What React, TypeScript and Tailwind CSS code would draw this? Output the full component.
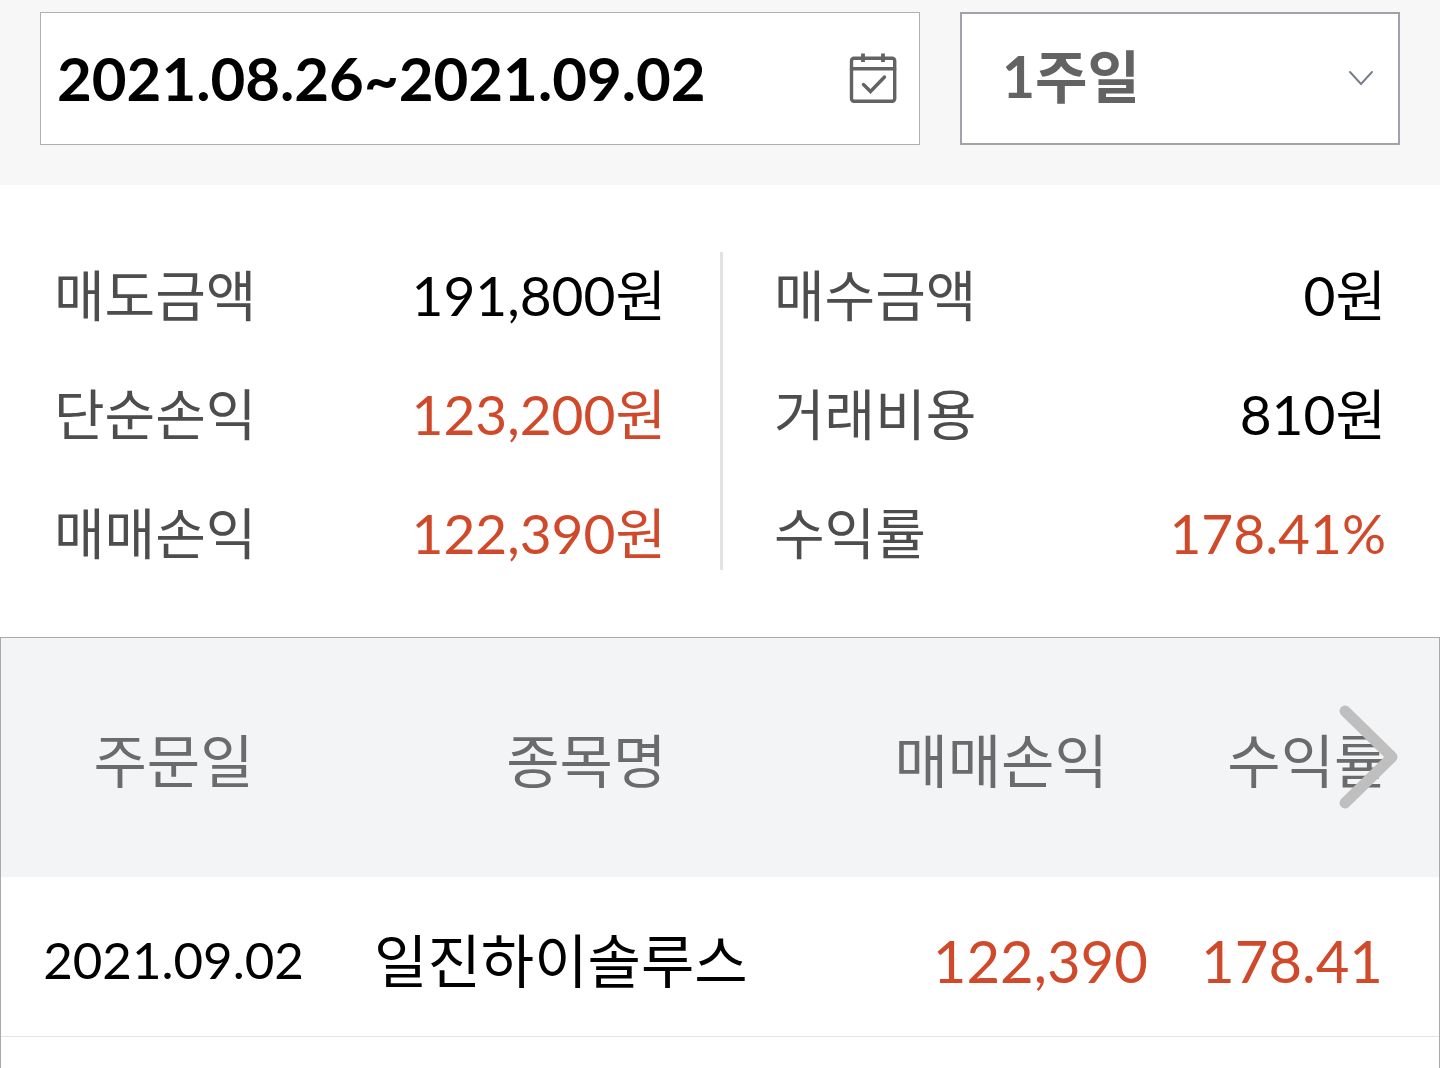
import React from 'react';
import clsx from 'clsx';

interface SummaryItem {
    label: string;
    value: string;
    highlight?: boolean;
}

interface TradeRow {
    date: string;
    name: string;
    profit: string;
    rate: string;
}

const LEFT_ITEMS: SummaryItem[] = [
    { label: '매도금액', value: '191,800원' },
    { label: '단순손익', value: '123,200원', highlight: true },
    { label: '매매손익', value: '122,390원', highlight: true },
];

const RIGHT_ITEMS: SummaryItem[] = [
    { label: '매수금액', value: '0원' },
    { label: '거래비용', value: '810원' },
    { label: '수익률', value: '178.41%', highlight: true },
];

const TRADES: TradeRow[] = [
    { date: '2021.09.02', name: '일진하이솔루스', profit: '122,390', rate: '178.41' },
];

const PERIODS = ['1주일', '1개월', '3개월'];

const CalendarIcon = () => (
    <svg viewBox="0 0 48 54" className="w-12 h-[54px]" fill="none" stroke="#636363" strokeWidth="3.4" strokeLinecap="round">
        <rect x="2.5" y="7.2" width="43.2" height="43" rx="2.5" />
        <path d="M2.5 17.8H45.7" />
        <path d="M14 2.5V11M34 2.5V11" strokeWidth="3.8" strokeLinecap="butt" />
        <path d="M14.5 33.5L21.5 40.5L35.5 26" strokeLinejoin="miter" />
    </svg>
);

const SearchBar = () => (
    <div className="grid grid-cols-[2fr_1fr] gap-10 px-10 pt-3 pb-10 bg-[#f7f7f7]">
        <div className="flex items-center h-[133px] pl-4 pr-[22px] pb-0.5 bg-white border border-[#b0b0b0]">
            <input
                type="text"
                aria-label="조회기간"
                defaultValue="2021.08.26~2021.09.02"
                className="flex-1 min-w-0 h-full text-[60px] font-bold text-black outline-none"
            />
            <button type="button" aria-label="달력">
                <CalendarIcon />
            </button>
        </div>
        <div className="relative">
            <select
                aria-label="기간 선택"
                className="w-full h-[133px] pl-10 pr-20 pb-1 appearance-none bg-white border-2 border-[#a0a4aa] text-[57px] font-bold text-[#636363] outline-none"
            >
                {PERIODS.map((period) => (
                    <option key={period}>{period}</option>
                ))}
            </select>
            <svg
                viewBox="0 0 26 18"
                className="absolute right-[26px] top-1/2 -translate-y-1/2 w-[26px] h-[18px] pointer-events-none"
                fill="none"
                stroke="#76808b"
                strokeWidth="2"
                strokeLinecap="round"
            >
                <path d="M2 2L13 14L24 2" />
            </svg>
        </div>
    </div>
);

const SummaryColumn: React.FC<{ items: SummaryItem[]; className?: string }> = ({ items, className }) => (
    <dl className={clsx('flex flex-col gap-[39px]', className)}>
        {items.map((item) => (
            <div key={item.label} className="flex items-center justify-between h-20 pt-1.5 text-[55px] leading-none">
                <dt className="text-[#4d4d4d]">{item.label}</dt>
                <dd className={item.highlight ? 'text-[#d0492a]' : 'text-black'}>{item.value}</dd>
            </div>
        ))}
    </dl>
);

const TradeTable = () => (
    <div className="relative flex-1 border border-b-0 border-[#aaaaaa]">
        <table className="w-full table-fixed border-separate border-spacing-0">
            <colgroup>
                <col className="w-[24%]" />
                <col className="w-[33.4%]" />
                <col className="w-[24.3%]" />
                <col />
            </colgroup>
            <thead>
                <tr className="h-[239px] bg-[#f3f4f6] text-[58px] text-[#6b6b6b]">
                    {['주문일', '종목명', '매매손익', '수익률'].map((title) => (
                        <th key={title} scope="col" className="pt-1.5 font-normal whitespace-nowrap">{title}</th>
                    ))}
                </tr>
            </thead>
            <tbody>
                {TRADES.map((trade) => (
                    <tr key={trade.name} className="h-40 text-[58px] whitespace-nowrap *:border-b *:border-[#e3e3e3] *:pt-2">
                        <td className="text-center text-[51px] text-black">{trade.date}</td>
                        <td className="pl-7 text-black">{trade.name}</td>
                        <td className="pr-7 text-right text-[#d0492a]">{trade.profit}</td>
                        <td className="pr-14 text-right text-[#d0492a]">{trade.rate}</td>
                    </tr>
                ))}
            </tbody>
        </table>
        <button type="button" aria-label="다음 항목" className="absolute right-10 top-[66px]">
            <svg
                viewBox="0 0 60 106"
                className="w-[60px] h-[106px]"
                fill="none"
                stroke="#bfbfbf"
                strokeWidth="11"
                strokeLinecap="round"
                strokeLinejoin="round"
            >
                <path d="M6 7L53 53L6 99" />
            </svg>
        </button>
    </div>
);

export default function App() {
    return (
        <main className="flex flex-col min-h-screen bg-white font-['Lato','Noto_Sans_CJK_KR',sans-serif]">
            <SearchBar />
            <section className="grid grid-cols-2 py-[67px]">
                <SummaryColumn items={LEFT_ITEMS} className="px-[54px]" />
                <SummaryColumn items={RIGHT_ITEMS} className="pl-[51px] pr-[54px] border-l-3 border-[#e3e3e3]" />
            </section>
            <TradeTable />
        </main>
    );
}
